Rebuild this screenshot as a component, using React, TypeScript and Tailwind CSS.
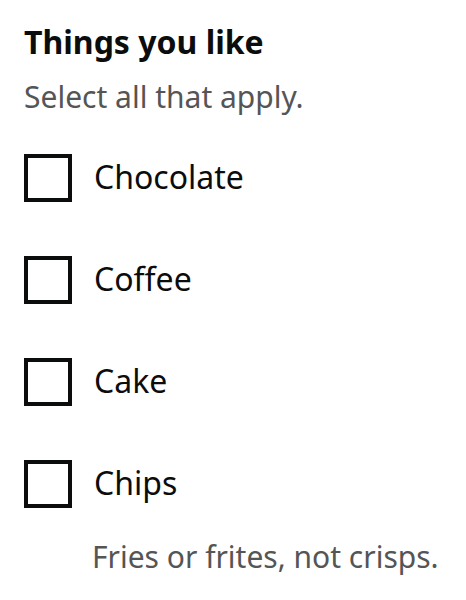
import React from "react";

const items = [
  { id: "chocolate", label: "Chocolate" },
  { id: "coffee", label: "Coffee" },
  { id: "cake", label: "Cake" },
  { id: "chips", label: "Chips", hint: "Fries or frites, not crisps." },
];

const App: React.FC = () => {
  return (
    <div
      className="min-h-screen bg-white px-6 pt-6 text-[#0b0c0c]"
      style={{ fontFamily: '"Noto Sans", "Open Sans", sans-serif' }}
    >
      <fieldset>
        <legend className="text-[32px] font-bold leading-[36px]">
          Things you like
        </legend>
        <p className="mt-[19px] text-[30px] leading-[36px] text-[#555555]">
          Select all that apply.
        </p>

        <div className="mt-[39px] flex flex-col gap-[54px]">
          {items.map((item) => (
            <div key={item.id} className="flex items-start">
              <input
                id={item.id}
                type="checkbox"
                className="h-12 w-12 shrink-0 appearance-none border-4 border-[#0b0c0c] bg-white"
              />
              <div className="ml-5">
                <label
                  htmlFor={item.id}
                  className="ml-[2px] block text-[32px] leading-[46px]"
                >
                  {item.label}
                </label>
                {item.hint && (
                  <p className="mt-[33px] text-[30px] leading-[36px] text-[#555555]">
                    {item.hint}
                  </p>
                )}
              </div>
            </div>
          ))}
        </div>
      </fieldset>
    </div>
  );
};

export default App;
